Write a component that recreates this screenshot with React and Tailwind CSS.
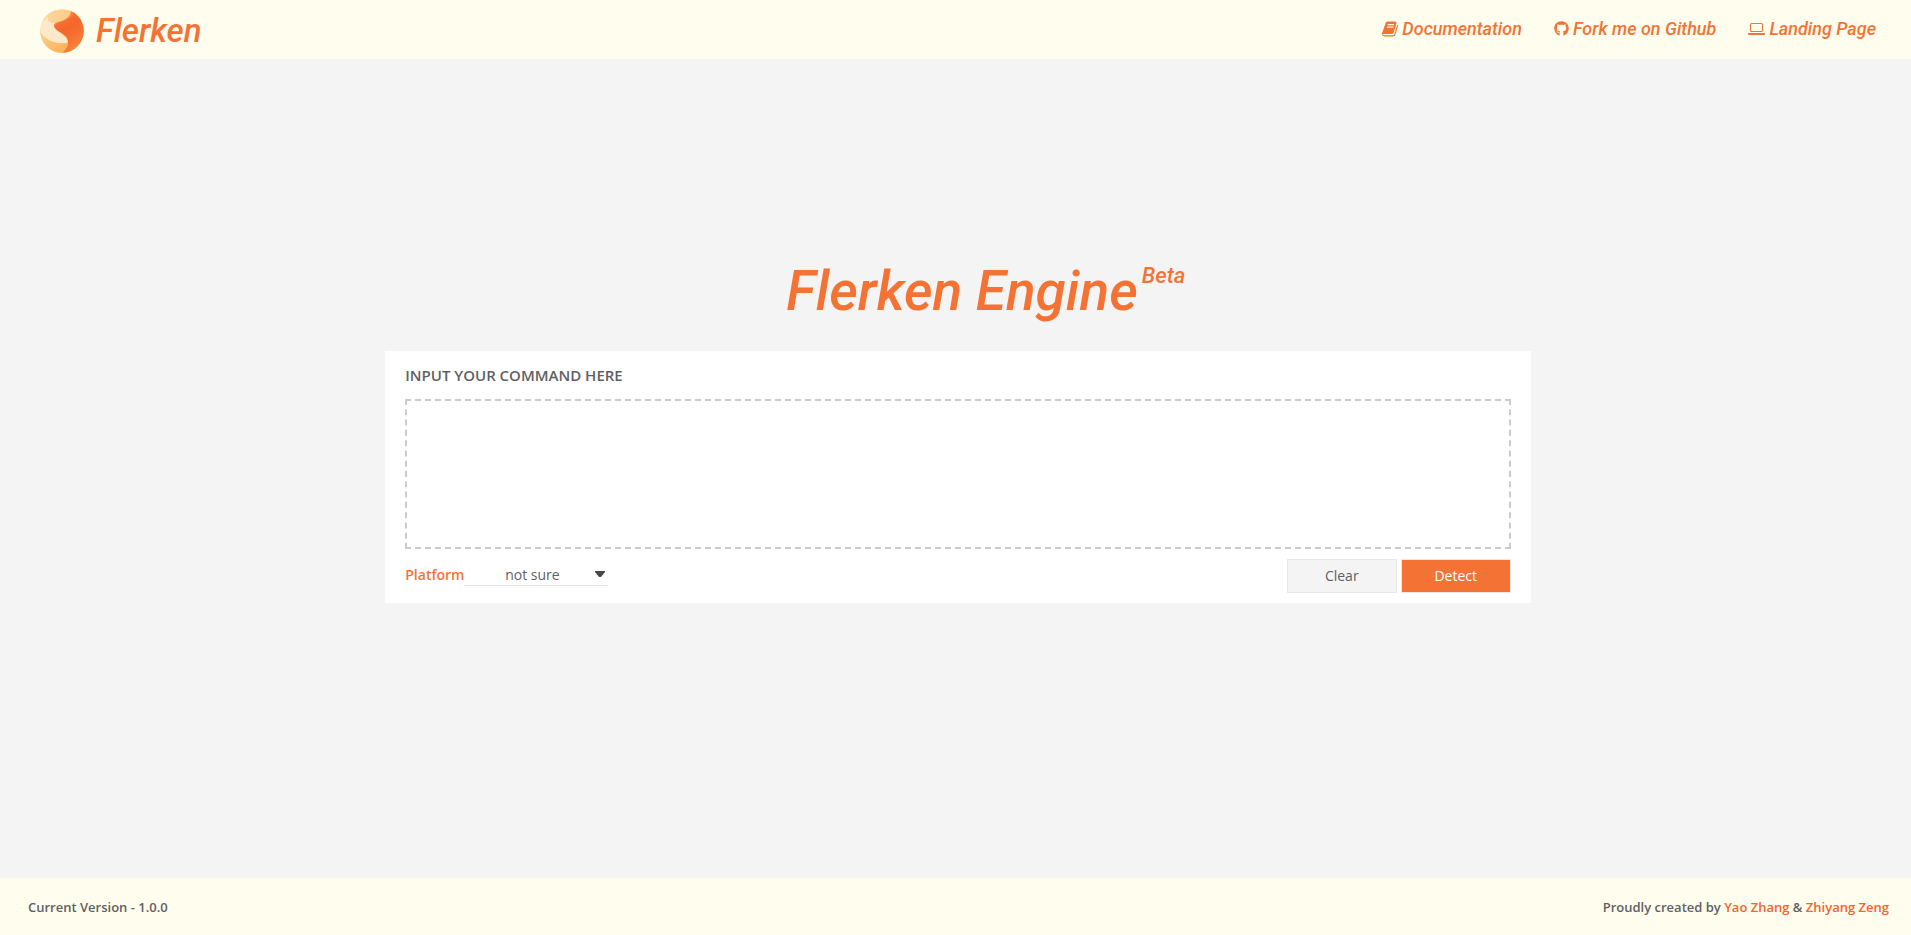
import { FaGithub } from "react-icons/fa";

function Logo() {
  return (
    <svg className="size-11" viewBox="0 0 44 44" aria-hidden="true">
      <defs>
        <linearGradient id="flame" x1="0.2" y1="0" x2="0.7" y2="1">
          <stop offset="0" stopColor="#f9803a" />
          <stop offset="0.4" stopColor="#f4662a" />
          <stop offset="0.65" stopColor="#f6702f" />
          <stop offset="1" stopColor="#fa8a40" />
        </linearGradient>
        <linearGradient id="sand" x1="0" y1="0" x2="1" y2="0">
          <stop offset="0" stopColor="#fbdba0" />
          <stop offset="1" stopColor="#fcc478" />
        </linearGradient>
        <linearGradient id="dune" x1="0" y1="0" x2="1" y2="1">
          <stop offset="0" stopColor="#fcd48f" />
          <stop offset="1" stopColor="#fbac50" />
        </linearGradient>
        <clipPath id="disc"><circle cx="22" cy="22" r="21.8" /></clipPath>
      </defs>
      <g clipPath="url(#disc)">
        <rect width="44" height="44" fill="url(#sand)" />
        <path d="M31 2 C31 7 27 10 22 12 C18 13 14 14 14 17 C15 22 24 24 27 29 C30 35 26 40 22 44 H44 V3Z" fill="url(#flame)" />
        <path d="M31 2 C31 7 27 10 22 12 C18 13 15 14 14 17 C19 12 27 13 34 5Z" fill="#fa9142" opacity="0.6" />
        <path d="M8 8 C2 12 -1 19 0 23 C5 31 15 36 27 34 C29 27 17 24 14.500 19 C13 16 14 15 15 14 C11 14 7 13 8 8Z" fill="#fde8cc" />
        <path d="M0 22 C5 31 15 36 28 33.500 C28 38 25 41 22 44 H0Z" fill="url(#dune)" />
      </g>
    </svg>
  );
}

function Book() {
  return (
    <svg className="h-[18px] w-4" viewBox="0 0 1664 1792" fill="currentColor" aria-hidden="true">
      <path d="M1639 478q40 57 18 129l-275 906q-19 64-76.500 107.500t-122.500 43.500h-923q-77 0-148.500-53.500t-99.500-131.500q-24-67-2-127 0-4 3-27t4-37q1-8-3-21.500t-3-19.500q2-11 8-21t16.500-23.500 16.500-23.500q23-38 45-91.500t30-91.500q3-10 .5-30t-.5-28q3-11 17-28t17-23q21-36 42-92t25-90q1-9-2.500-32t.5-28q4-13 22-30.500t22-22.500q19-26 42.500-84.500t27.500-96.500q1-8-3-25.500t-2-26.500q2-8 9-18t18-23 17-21q8-12 16.500-30.500t15-35 16-36 19.500-32 26.500-23.500 36-11.500 47.500 5.500l-1 3q38-9 51-9h761q74 0 114 56t18 130l-274 906q-36 119-71.500 153.500t-128.500 34.500h-869q-27 0-38 15-11 16-1 43 24 70 144 70h923q29 0 56-15.500t35-41.500l300-987q7-22 5-57 38 15 59 43zm-1064 2q-4 13 2 22.500t20 9.500h608q13 0 25.500-9.500t16.500-22.500l21-64q4-13-2-22.500t-20-9.500h-608q-13 0-25.500 9.500t-16.500 22.500zm-83 256q-4 13 2 22.500t20 9.500h608q13 0 25.500-9.500t16.500-22.500l21-64q4-13-2-22.500t-20-9.500h-608q-13 0-25.500 9.500t-16.500 22.500z" />
    </svg>
  );
}

function Laptop() {
  return (
    <svg className="h-3 w-[17px]" viewBox="0 0 17 12" fill="currentColor" aria-hidden="true">
      <path fillRule="evenodd" d="M3.500 0h10A1.500 1.500 0 0 1 15 1.500v6A1.500 1.500 0 0 1 13.500 9h-10A1.500 1.500 0 0 1 2 7.500v-6A1.500 1.500 0 0 1 3.500 0ZM3.500 1a.5.5 0 0 0-.5.5v6a.5.5 0 0 0 .5.5h10a.5.5 0 0 0 .5-.5v-6a.5.5 0 0 0-.5-.5Z" />
      <path d="M0 10h17v1q0 1-1.500 1h-14Q0 12 0 11Z" />
    </svg>
  );
}

export default function App() {
  return (
    <div className="flex min-h-screen flex-col bg-[#f4f4f4] font-['Open_Sans',sans-serif] text-[#5f5f64]">
      <header className="flex items-start justify-between bg-[#fffded] pr-[35px] pl-10 font-['Roboto',sans-serif] font-medium text-[#f47334] italic">
        <a href="#" className="flex h-[59px] items-center gap-3 pt-0.5 text-[33px]">
          <Logo />
          <span>Flerken</span>
        </a>
        <nav className="flex h-[57px] items-center gap-8 text-[18px]">
          <a href="#docs" className="flex items-center gap-1"><Book />Documentation</a>
          <a href="#github" className="flex items-center gap-1"><FaGithub className="size-[15px]" />Fork me on Github</a>
          <a href="#landing" className="flex items-center gap-1"><Laptop />Landing Page</a>
        </nav>
      </header>

      <main className="flex flex-1 flex-col items-center pt-[202px] pl-[5px]">
        <h1 className="relative pl-2 font-['Roboto',sans-serif] text-[55px] leading-[60px] font-medium text-[#f47334] italic">
          Flerken Engine
          <sup className="absolute top-0 left-full pl-1 text-[22px] leading-[30px] font-medium">Beta</sup>
        </h1>
        <form className="mt-[30px] flex w-[60.1%] flex-col bg-white px-5 pt-3 pb-2.5" onSubmit={(e) => e.preventDefault()}>
          <label htmlFor="command" className="text-[15px] leading-6 font-semibold">INPUT YOUR COMMAND HERE</label>
          <textarea id="command" className="mt-3 h-[150px] w-full resize-none border-2 border-dashed border-[#cbcbcb] p-2 outline-none" />
          <div className="flex items-start justify-between pt-2.5">
            <div className="flex items-center">
              <label htmlFor="platform" className="pt-1 text-sm font-semibold text-[#f47334]">Platform</label>
              <div className="relative flex items-center border-b border-[#e4e4e4]">
                <select id="platform" className="h-[26px] w-36 appearance-none bg-transparent pt-1.5 pr-2 text-center text-sm outline-none">
                  <option>not sure</option>
                  <option>linux</option>
                  <option>windows</option>
                </select>
                <svg className="pointer-events-none absolute top-3 right-[3px] h-1.5 w-2.5" viewBox="0 0 10 6" fill="#47474c" aria-hidden="true"><path d="M0 0h10v1L6 6H4L0 1Z" /></svg>
              </div>
            </div>
            <div className="flex gap-1">
              <button type="reset" className="h-[34px] w-[110px] border border-[#e8e8e8] bg-[#f4f4f4] text-sm">Clear</button>
              <button type="submit" className="h-[34px] w-[110px] border border-[#e8e8e8] bg-[#f47334] text-sm text-white">Detect</button>
            </div>
          </div>
        </form>
      </main>

      <footer className="flex h-[57px] items-center justify-between bg-[#fffded] pt-0.5 pr-[22px] pl-7 text-[13px] font-semibold">
        <p>Current Version - 1.0.0</p>
        <p>Proudly created by <a href="#yao" className="text-[#f5642b]">Yao Zhang</a> &amp; <a href="#zhiyang" className="text-[#f5642b]">Zhiyang Zeng</a></p>
      </footer>
    </div>
  );
}
